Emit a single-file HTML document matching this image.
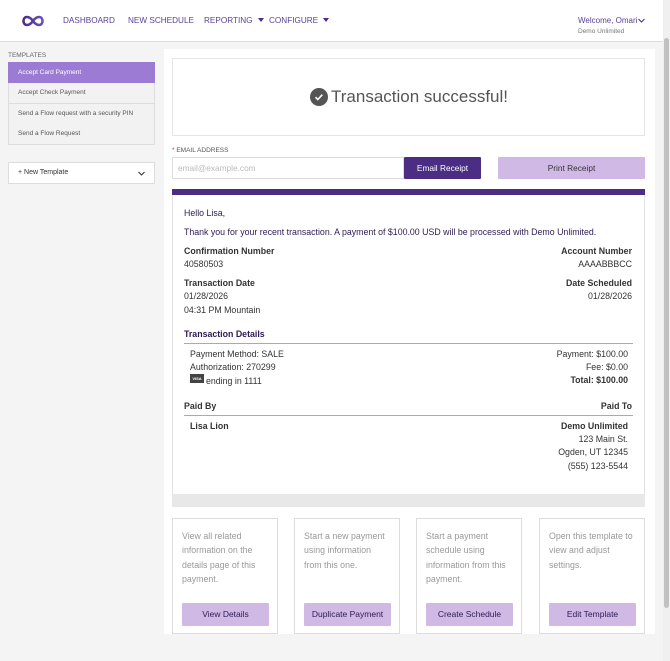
<!DOCTYPE html>
<html><head><meta charset="utf-8"><style>
*{box-sizing:border-box;margin:0;padding:0}
body{width:670px;height:661px;overflow:hidden;background:#f4f4f4;font-family:"Liberation Sans",sans-serif;position:relative;color:#333}
.abs{position:absolute}
.hdr{left:0;top:0;width:663px;height:42px;background:#fff;border-bottom:1px solid #ddd}
.nav{top:16px;font-size:8.2px;color:#5a3f9a}
.tri{display:inline-block;width:0;height:0;border-left:3.5px solid transparent;border-right:3.5px solid transparent;border-top:4px solid #4b2e83;margin-left:5px;vertical-align:1px}
.side{font-size:6.5px;color:#555}
.item{left:8px;width:147px;height:21px;background:#f2f2f2;border:1px solid #ddd;border-top:none;padding-left:9px;line-height:20px;font-size:6.5px;color:#555}
.main{left:164px;top:49px;width:491px;height:585px;background:#fff}
.r{font-size:8.8px;color:#333}
.b{font-weight:bold}
.card{top:518px;width:106px;height:116px;border:1px solid #ddd;background:#fff}
.card p{position:absolute;left:9px;top:10px;right:8px;font-size:8.8px;line-height:14.4px;color:#999}
.card .btn{position:absolute;left:9px;top:84px;width:87px;height:23px;background:#d1b9e5;color:#2d1b54;font-size:8.5px;text-align:center;line-height:23px;border-radius:1px}
</style></head><body>
<div class="abs hdr"></div>
<svg class="abs" style="left:22px;top:15px" width="22" height="12" viewBox="0 0 22 12"><defs><linearGradient id="g" x1="0" x2="1"><stop offset="0" stop-color="#4b2e83"/><stop offset="1" stop-color="#6a4fc0"/></linearGradient></defs><path d="M11 6C8.5 2.5 6.8 2 5 2 2.8 2 1.5 3.8 1.5 6S2.8 10 5 10c1.8 0 3.5-.5 6-4s4.2-4 6-4c2.2 0 3.5 1.8 3.5 4s-1.3 4-3.5 4c-1.8 0-3.5-.5-6-4z" fill="none" stroke="url(#g)" stroke-width="2.6"/></svg>
<div class="abs nav" style="left:63px">DASHBOARD</div>
<div class="abs nav" style="left:128px">NEW SCHEDULE</div>
<div class="abs nav" style="left:204px">REPORTING<span class="tri"></span></div>
<div class="abs nav" style="left:269px">CONFIGURE<span class="tri"></span></div>
<div class="abs" style="left:578px;top:16px;font-size:8px;color:#5a3f9a">Welcome, Omari <svg width="7" height="5" viewBox="0 0 7 5" style="margin-left:-2px"><path d="M.5 1l3 3 3-3" fill="none" stroke="#4b2e83" stroke-width="1.1"/></svg></div>
<div class="abs" style="left:578px;top:28px;font-size:6.5px;color:#777">Demo Unlimited</div>
<div class="abs" style="left:663px;top:0;width:7px;height:661px;background:#f0f0f0"></div>
<div class="abs" style="left:664px;top:38px;width:5px;height:570px;background:#c1c1c1;border-radius:3px"></div>

<div class="abs side" style="left:8px;top:52px;color:#666">TEMPLATES</div>
<div class="abs item" style="top:62px;background:#9b7bd4;color:#fff;border:1px solid #9b7bd4">Accept Card Payment</div>
<div class="abs item" style="top:83px">Accept Check Payment</div>
<div class="abs item" style="top:104px">Send a Flow request with a security PIN</div>
<div class="abs item" style="top:124px">Send a Flow Request</div>
<div class="abs" style="left:8px;top:162px;width:147px;height:22px;background:#fff;border:1px solid #ddd;font-size:7px;line-height:20px;padding-left:9px;color:#333">+ New Template<svg style="position:absolute;right:9px;top:8px" width="7" height="5" viewBox="0 0 7 5"><path d="M.5 1l3 3 3-3" fill="none" stroke="#333" stroke-width="1.1"/></svg></div>

<div class="abs main"></div>
<div class="abs" style="left:172px;top:58px;width:473px;height:78px;border:1px solid #e5e5e5"></div>
<div class="abs" style="left:310px;top:88px;width:18px;height:18px;border-radius:50%;background:#555"><svg width="18" height="18" viewBox="0 0 18 18"><path d="M5.5 9.2l2.3 2.3 4.5-4.8" fill="none" stroke="#fff" stroke-width="1.6"/></svg></div>
<div class="abs" style="left:331px;top:87px;font-size:17px;color:#555">Transaction successful!</div>
<div class="abs" style="left:172px;top:147px;font-size:6.5px;color:#555"><span style="color:#c33">* </span>EMAIL ADDRESS</div>
<div class="abs" style="left:172px;top:157px;width:232px;height:22px;border:1px solid #ddd;background:#fff;font-size:8.3px;color:#bbb;line-height:20px;padding-left:5px">email@example.com</div>
<div class="abs" style="left:404px;top:157px;width:77px;height:22px;background:#4b2e83;color:#fff;font-size:8.3px;text-align:center;line-height:22px;border-radius:1px">Email Receipt</div>
<div class="abs" style="left:498px;top:157px;width:147px;height:22px;background:#d1b9e5;color:#333;font-size:8.3px;text-align:center;line-height:22px;border-radius:1px">Print Receipt</div>

<div class="abs" style="left:172px;top:189px;width:473px;height:318px;border:1px solid #e2e2e2;border-top:none"></div>
<div class="abs" style="left:172px;top:189px;width:473px;height:6px;background:#4b2e83"></div>
<div class="abs" style="left:172px;top:494px;width:473px;height:13px;background:#e8e8e8"></div>
<div class="abs r" style="left:184px;top:208px;color:#2d1b54">Hello Lisa,</div>
<div class="abs r" style="left:184px;top:227px;color:#2d1b54">Thank you for your recent transaction. A payment of $100.00 USD will be processed with Demo Unlimited.</div>
<div class="abs r b" style="left:184px;top:246px">Confirmation Number</div>
<div class="abs r" style="left:184px;top:259px">40580503</div>
<div class="abs r b" style="right:38px;top:246px">Account Number</div>
<div class="abs r" style="right:38px;top:259px">AAAABBBCC</div>
<div class="abs r b" style="left:184px;top:278px">Transaction Date</div>
<div class="abs r" style="left:184px;top:291px">01/28/2026</div>
<div class="abs r" style="left:184px;top:305px">04:31 PM Mountain</div>
<div class="abs r b" style="right:38px;top:278px">Date Scheduled</div>
<div class="abs r" style="right:38px;top:291px">01/28/2026</div>
<div class="abs r b" style="left:184px;top:329px;color:#2d1b54">Transaction Details</div>
<div class="abs" style="left:184px;top:343px;width:449px;height:1px;background:#aaa"></div>
<div class="abs r" style="left:190px;top:349px">Payment Method: SALE</div>
<div class="abs r" style="left:190px;top:362px">Authorization: 270299</div>
<div class="abs" style="left:190px;top:374px;width:14px;height:9px;background:#444;color:#fff;font-size:4px;text-align:center;line-height:9px;font-weight:bold">VISA</div>
<div class="abs r" style="left:206px;top:376px">ending in 1111</div>
<div class="abs r" style="right:42px;top:349px">Payment: $100.00</div>
<div class="abs r" style="right:42px;top:362px">Fee: $0.00</div>
<div class="abs r b" style="right:42px;top:375px">Total: $100.00</div>
<div class="abs r b" style="left:184px;top:401px">Paid By</div>
<div class="abs r b" style="right:38px;top:401px">Paid To</div>
<div class="abs" style="left:184px;top:415px;width:449px;height:1px;background:#aaa"></div>
<div class="abs r b" style="left:190px;top:421px">Lisa Lion</div>
<div class="abs r b" style="right:42px;top:421px">Demo Unlimited</div>
<div class="abs r" style="right:42px;top:434px">123 Main St.</div>
<div class="abs r" style="right:42px;top:447px">Ogden, UT 12345</div>
<div class="abs r" style="right:42px;top:461px">(555) 123-5544</div>

<div class="abs card" style="left:172px"><p>View all related information on the details page of this payment.</p><div class="btn">View Details</div></div>
<div class="abs card" style="left:294px"><p>Start a new payment using information from this one.</p><div class="btn">Duplicate Payment</div></div>
<div class="abs card" style="left:416px"><p>Start a payment schedule using information from this payment.</p><div class="btn">Create Schedule</div></div>
<div class="abs card" style="left:539px"><p>Open this template to view and adjust settings.</p><div class="btn">Edit Template</div></div>
</body></html>
